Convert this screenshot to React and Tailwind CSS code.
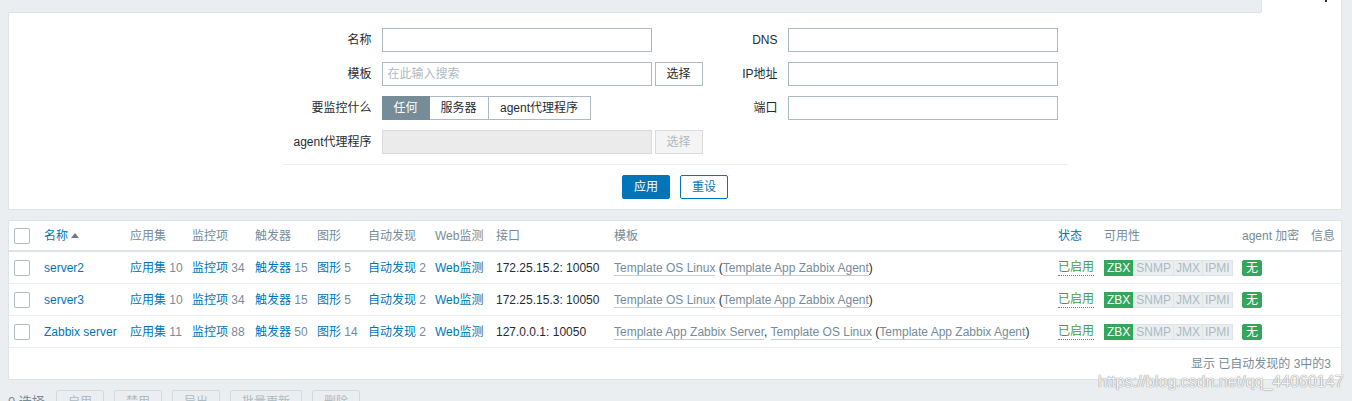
import React from 'react';

const font = { fontFamily: '"Liberation Sans", Arial, "Noto Sans CJK SC", sans-serif' };

const cols = [30, 86, 62, 63, 62, 51, 67, 61, 118, 444, 46, 138, 69, 35];

const headers = [
  { t: '', kind: 'check' },
  { t: '名称', kind: 'sort' },
  { t: '应用集' },
  { t: '监控项' },
  { t: '触发器' },
  { t: '图形' },
  { t: '自动发现' },
  { t: 'Web监测' },
  { t: '接口' },
  { t: '模板' },
  { t: '状态', kind: 'link' },
  { t: '可用性' },
  { t: 'agent 加密' },
  { t: '信息' },
];

const hosts = [
  {
    name: 'server2', apps: 10, items: 34, triggers: 15, graphs: 5, disc: 2,
    iface: '172.25.15.2: 10050',
    templates: [['l', 'Template OS Linux'], ['t', ' ('], ['l', 'Template App Zabbix Agent'], ['t', ')']],
  },
  {
    name: 'server3', apps: 10, items: 34, triggers: 15, graphs: 5, disc: 2,
    iface: '172.25.15.3: 10050',
    templates: [['l', 'Template OS Linux'], ['t', ' ('], ['l', 'Template App Zabbix Agent'], ['t', ')']],
  },
  {
    name: 'Zabbix server', apps: 11, items: 88, triggers: 50, graphs: 14, disc: 2,
    iface: '127.0.0.1: 10050',
    templates: [
      ['l', 'Template App Zabbix Server'], ['t', ', '], ['l', 'Template OS Linux'],
      ['t', ' ('], ['l', 'Template App Zabbix Agent'], ['t', ')'],
    ],
  },
];

const Checkbox = () => (
  <span className="block w-[16px] h-[16px] border border-[#acbbc2] rounded-[2px] bg-white" />
);

const Cell = ({ i, children, className = '' }) => (
  <div
    className={`shrink-0 flex items-center pl-[5px] whitespace-nowrap overflow-visible ${className}`}
    style={{ width: cols[i] }}
  >
    {children}
  </div>
);

const LinkCount = ({ label, n }) => (
  <span>
    <span className="text-[#0275b8]">{label}</span>
    <span className="text-[#768d99]"> {n}</span>
  </span>
);

const Input = ({ placeholder, disabled }) => (
  <div
    className={`w-[270px] h-[24px] border flex items-center px-[5px] ${
      disabled ? 'bg-[#ebebeb] border-[#dcdcdc]' : 'bg-white border-[#acbbc2]'
    }`}
  >
    {placeholder && <span className="text-[#acbbc2]">{placeholder}</span>}
  </div>
);

const SelectBtn = ({ disabled }) => (
  <div
    className={`ml-[3px] w-[48px] h-[24px] border flex items-center justify-center ${
      disabled ? 'border-[#dcdcdc] bg-[#f4f4f4] text-[#acbbc2]' : 'border-[#acbbc2] bg-white text-[#1f2c33]'
    }`}
  >
    选择
  </div>
);

const Label = ({ children, w }) => (
  <div className={`${w} shrink-0 text-right pr-[10px]`}>{children}</div>
);

export default function App() {
  return (
    <div className="relative w-full h-[401px] overflow-hidden bg-[#ebeef0] text-[12px] leading-[16px] text-[#1f2c33]" style={font}>
      <div className="pl-[8px] pr-[10px]">
        {/* filter tab */}
        <div className="flex justify-end h-[12px]">
          <div className="relative w-[81px] h-[12px] bg-white border-l border-r border-[#dfe4e7]">
            <span className="absolute left-[63px] top-0 w-[2px] h-[2px] bg-[#1f2c33]" />
          </div>
        </div>

        {/* filter panel */}
        <div className="bg-white border-l border-r border-b border-[#dfe4e7]">
          <div className="h-0 border-t border-[#dfe4e7] mr-[80px] -ml-px" />
          <div className="w-[785px] mx-auto pt-[15px]">
            <div className="flex flex-col gap-[10px]">
              <div className="flex items-center h-[24px]">
                <Label w="w-[99px]">名称</Label>
                <div className="w-[321px] shrink-0"><Input /></div>
                <Label w="w-[85px]">DNS</Label>
                <Input />
              </div>
              <div className="flex items-center h-[24px]">
                <Label w="w-[99px]">模板</Label>
                <div className="w-[321px] shrink-0 flex"><Input placeholder="在此输入搜索" /><SelectBtn /></div>
                <Label w="w-[85px]">IP地址</Label>
                <Input />
              </div>
              <div className="flex items-center h-[24px]">
                <Label w="w-[99px]">要监控什么</Label>
                <div className="w-[321px] shrink-0 flex">
                  <div className="w-[48px] h-[24px] flex items-center justify-center bg-[#768d99] border border-[#768d99] text-white">任何</div>
                  <div className="w-[59px] h-[24px] flex items-center justify-center bg-white border-y border-r border-[#acbbc2]">服务器</div>
                  <div className="w-[102px] h-[24px] flex items-center justify-center bg-white border-y border-r border-[#acbbc2]">agent代理程序</div>
                </div>
                <Label w="w-[85px]">端口</Label>
                <Input />
              </div>
              <div className="flex items-center h-[24px]">
                <Label w="w-[99px]">agent代理程序</Label>
                <div className="w-[321px] shrink-0 flex"><Input disabled /><SelectBtn disabled /></div>
              </div>
            </div>
            <div className="mt-[10px] border-t border-[#ebeef0]" />
            <div className="flex justify-center gap-[10px] pt-[10px] pb-[10px]">
              <div className="w-[48px] h-[24px] flex items-center justify-center bg-[#0275b8] border border-[#0275b8] text-white rounded-[2px]">应用</div>
              <div className="w-[48px] h-[24px] flex items-center justify-center bg-white border border-[#0275b8] text-[#0275b8] rounded-[2px]">重设</div>
            </div>
          </div>
        </div>

        {/* host table */}
        <div className="mt-[10px] bg-white border border-[#dfe4e7]">
          <div className="flex h-[31px] border-b-2 border-[#dfe4e7]">
            {headers.map((h, i) => (
              <Cell key={i} i={i}>
                {h.kind === 'check' ? (
                  <Checkbox />
                ) : h.kind === 'sort' ? (
                  <span className="flex items-center text-[#0275b8]">
                    {h.t}
                    <svg width="8" height="5" viewBox="0 0 8 5" className="ml-[3px]">
                      <path d="M0 5 L4 0 L8 5 Z" fill="#6a7b84" />
                    </svg>
                  </span>
                ) : h.kind === 'link' ? (
                  <span className="text-[#0275b8]">{h.t}</span>
                ) : (
                  <span className="text-[#768d99]">{h.t}</span>
                )}
              </Cell>
            ))}
          </div>

          {hosts.map((r) => (
            <div key={r.name} className="flex h-[32px] border-b border-[#ebeef0]">
              <Cell i={0}><Checkbox /></Cell>
              <Cell i={1}><span className="text-[#0275b8]">{r.name}</span></Cell>
              <Cell i={2}><LinkCount label="应用集" n={r.apps} /></Cell>
              <Cell i={3}><LinkCount label="监控项" n={r.items} /></Cell>
              <Cell i={4}><LinkCount label="触发器" n={r.triggers} /></Cell>
              <Cell i={5}><LinkCount label="图形" n={r.graphs} /></Cell>
              <Cell i={6}><LinkCount label="自动发现" n={r.disc} /></Cell>
              <Cell i={7}><span className="text-[#0275b8]">Web监测</span></Cell>
              <Cell i={8}>{r.iface}</Cell>
              <Cell i={9}>
                <span>
                  {r.templates.map(([k, t], j) =>
                    k === 'l' ? (
                      <span key={j} className="text-[#768d99] border-b border-[#c5ced3]">{t}</span>
                    ) : (
                      <span key={j} className="whitespace-pre">{t}</span>
                    )
                  )}
                </span>
              </Cell>
              <Cell i={10}>
                <span className="text-[#429e47] border-b border-dotted border-[#429e47]">已启用</span>
              </Cell>
              <Cell i={11}>
                <div className="flex h-[16px] leading-[14px]">
                  <span className="px-[2px] border border-[#34a65c] bg-[#34a65c] text-white">ZBX</span>
                  <span className="px-[2px] border border-[#dfe4e7] bg-[#ebeef0] text-[#acbbc2]">SNMP</span>
                  <span className="px-[2px] border-y border-r border-[#dfe4e7] bg-[#ebeef0] text-[#acbbc2]">JMX</span>
                  <span className="px-[2px] border-y border-r border-[#dfe4e7] bg-[#ebeef0] text-[#acbbc2]">IPMI</span>
                </div>
              </Cell>
              <Cell i={12}>
                <span className="h-[16px] leading-[14px] px-[3px] border border-[#34a65c] bg-[#34a65c] text-white rounded-[2px]">无</span>
              </Cell>
              <Cell i={13} />
            </div>
          ))}

          <div className="h-[31px] flex items-center justify-end pr-[10px] text-[#768d99]">
            显示 已自动发现的 3中的3
          </div>
        </div>

        {/* action bar */}
        <div className="mt-[10px] flex items-center h-[24px]">
          <span className="w-[48px] shrink-0 text-[#768d99] text-[13px]">0 选择</span>
          <div className="flex gap-[10px]">
            {['启用', '禁用', '导出', '批量更新', '删除'].map((b) => (
              <div
                key={b}
                className={`${b === '批量更新' ? 'w-[72px]' : 'w-[48px]'} h-[24px] flex items-center justify-center border border-[#d4dbdf] rounded-[2px] text-[#acbbc2]`}
              >
                {b}
              </div>
            ))}
          </div>
        </div>
      </div>

      {/* watermark */}
      <div
        className="absolute left-[1098px] top-[372px] text-[16px] leading-[20px] whitespace-nowrap text-white/90 [text-shadow:0_0_1px_#8c8c8c,0_0_1px_#8c8c8c]"
        style={{ fontFamily: '"Liberation Sans", Arial, sans-serif' }}
      >
        https://blog.csdn.net/qq_44060147
      </div>
    </div>
  );
}
